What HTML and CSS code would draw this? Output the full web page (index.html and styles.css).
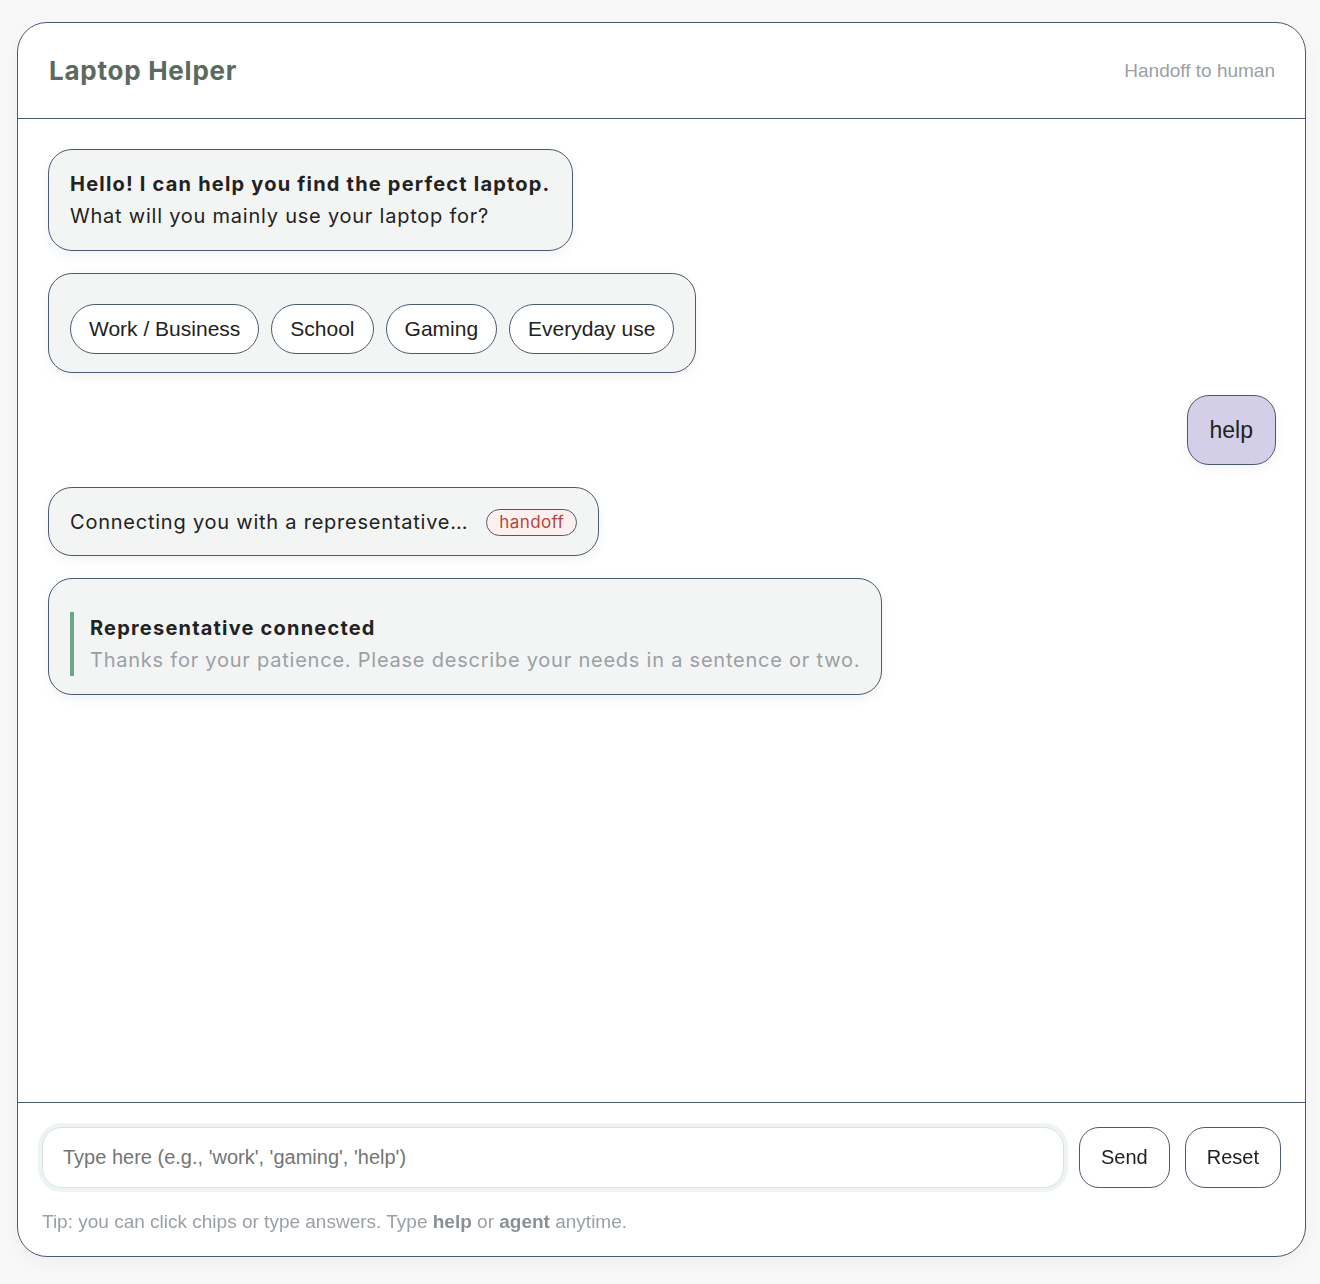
FILE: index.html
```html
<!DOCTYPE html>
<html lang="en">
<head>
<meta charset="utf-8">
<title>Laptop Helper</title>
<link rel="stylesheet" href="styles.css">
</head>
<body>
<div class="card">
  <header class="header">
    <h1 class="title">Laptop Helper</h1>
    <span class="handoff-link">Handoff to human</span>
  </header>
  <main class="messages">
    <div class="bubble bot">
      <div class="strong">Hello! I can help you find the perfect laptop.</div>
      <div>What will you mainly use your laptop for?</div>
    </div>
    <div class="bubble bot chips-bubble">
      <div class="chips">
        <button class="chip">Work / Business</button>
        <button class="chip">School</button>
        <button class="chip">Gaming</button>
        <button class="chip">Everyday use</button>
      </div>
    </div>
    <div class="bubble user">help</div>
    <div class="bubble bot status">
      <span>Connecting you with a representative…</span>
      <span class="badge">handoff</span>
    </div>
    <div class="bubble bot rep">
      <div class="rep-inner">
        <div class="strong">Representative connected</div>
        <div class="muted">Thanks for your patience. Please describe your needs in a sentence or two.</div>
      </div>
    </div>
  </main>
  <footer class="footer">
    <div class="composer">
      <input class="input" type="text" placeholder="Type here (e.g., 'work', 'gaming', 'help')" autofocus>
      <button class="btn">Send</button>
      <button class="btn">Reset</button>
    </div>
    <p class="tip">Tip: you can click chips or type answers. Type <b>help</b> or <b>agent</b> anytime.</p>
  </footer>
</div>
</body>
</html>
```
FILE: styles.css
```css
* { box-sizing: border-box; }
html, body { margin: 0; }
body {
  background: #f8f8f8;
  padding: 22px 14px 27px 17px;
  font-family: Inter, "Liberation Sans", sans-serif;
  color: #222;
}
.card {
  height: 1235px;
  background: #fff;
  border: 1px solid #4b5a70;
  border-radius: 30px;
  display: flex;
  flex-direction: column;
  overflow: hidden;
  box-shadow: 0 6px 20px rgba(0,0,0,0.04);
}
.header {
  height: 96px;
  flex: none;
  border-bottom: 1px solid #4b5a70;
  display: flex;
  align-items: center;
  justify-content: space-between;
  padding: 0 30px 0 31px;
}
.title {
  margin: 0;
  font-size: 26px;
  font-weight: 700;
  color: #5b6a61;
  letter-spacing: 0.75px;
}
.handoff-link {
  font-family: "Liberation Sans", Arial, sans-serif;
  font-size: 19px;
  color: #9aa0a6;
}
.messages {
  flex: 1;
  padding: 30px 29px 30px 30px;
  display: flex;
  flex-direction: column;
  align-items: flex-start;
  gap: 22px;
}
.bubble {
  background: #f3f5f4;
  border: 1px solid #4b5a70;
  border-radius: 24px;
  padding: 18px 21px;
  font-size: 20px;
  line-height: 32px;
  letter-spacing: 0.77px;
  box-shadow: 0 4px 12px rgba(0,0,0,0.05);
}
.strong { font-weight: 700; letter-spacing: 1.2px; }
.chips-bubble { padding: 30px 21px 18px; }
.chips { display: flex; gap: 12px; }
.chip {
  font-family: "Liberation Sans", Arial, sans-serif;
  font-size: 21px;
  letter-spacing: 0;
  color: #222;
  background: #fff;
  border: 1px solid #4b5a70;
  border-radius: 25px;
  height: 50px;
  padding: 0 18px;
}
.user {
  align-self: flex-end;
  background: #d4cfe8;
  font-family: "Liberation Sans", Arial, sans-serif;
  font-size: 23px;
  letter-spacing: 0;
  padding: 18px 22px;
  border-radius: 22px;
}
.status {
  display: flex;
  align-items: center;
  gap: 18px;
  padding: 18px 21px 17px;
}
.badge {
  font-size: 17px;
  letter-spacing: 0.4px;
  line-height: 25px;
  color: #b4463d;
  background: #fdf0ef;
  border: 1px solid #4b5a70;
  border-radius: 14px;
  padding: 0 12px;
}
.rep { padding: 33px 21px 18px; }
.rep-inner {
  border-left: 4px solid #6ea783;
  padding-left: 16px;
}
.muted { color: #9aa0a6; }
.footer {
  flex: none;
  border-top: 1px solid #4b5a70;
  padding: 24px 24px 24px 24px;
}
.composer { display: flex; gap: 15px; }
.input {
  flex: 1;
  height: 61px;
  border: 1px solid #d8e4dc;
  border-radius: 20px;
  box-shadow: 0 0 0 4px #eef4f0;
  padding: 0 20px;
  font-family: "Liberation Sans", Arial, sans-serif;
  font-size: 20px;
  color: #222;
  outline: none;
}
.input::placeholder { color: #757575; }
.btn {
  font-family: "Liberation Sans", Arial, sans-serif;
  font-size: 20px;
  color: #222;
  background: #fff;
  border: 1px solid #4b5a70;
  border-radius: 20px;
  height: 61px;
  padding: 0 21px;
}
.tip {
  margin: 24px 0 0;
  font-family: "Liberation Sans", Arial, sans-serif;
  font-size: 19px;
  line-height: 20px;
  color: #9aa0a6;
}
.tip b { color: #8a9096; }
```
